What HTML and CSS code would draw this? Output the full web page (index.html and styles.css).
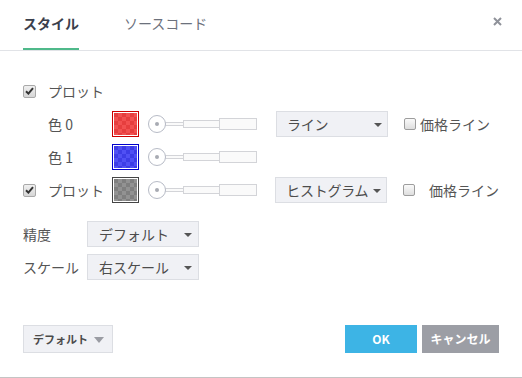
FILE: index.html
```html
<!DOCTYPE html>
<html lang="ja">
<head>
    <meta charset="UTF-8">
    <title>スタイル</title>
    <link rel="stylesheet" href="styles.css">
</head>
<body>
    <div class="dialog">
        <div class="header">
            <div class="tab active">スタイル</div>
            <div class="tab">ソースコード</div>
            <div class="close">
                <svg width="9" height="9" viewBox="0 0 9 9"><path d="M1 1L8 8M8 1L1 8" stroke="#8f929a" stroke-width="2"/></svg>
            </div>
        </div>

        <div class="content">
            <div class="row">
                <span class="check on"><svg width="9" height="8" viewBox="0 0 9 8"><path d="M1 4.2L3.4 6.6L8 1.2" fill="none" stroke="#333" stroke-width="2"/></svg></span>
                <span class="label">プロット</span>
            </div>

            <div class="row">
                <span class="check-space"></span>
                <span class="label">色 0</span>
                <span class="swatch red"><span class="fill"></span></span>
                <div class="slider">
                    <span class="knob"></span><span class="seg seg1"></span><span class="seg seg2"></span><span class="seg seg3"></span>
                </div>
                <div class="select plot-type">ライン<span class="caret"></span></div>
                <span class="check off"></span>
                <span class="opt-label">価格ライン</span>
            </div>

            <div class="row">
                <span class="check-space"></span>
                <span class="label">色 1</span>
                <span class="swatch blue"><span class="fill"></span></span>
                <div class="slider">
                    <span class="knob"></span><span class="seg seg1"></span><span class="seg seg2"></span><span class="seg seg3"></span>
                </div>
            </div>

            <div class="row">
                <span class="check on"><svg width="9" height="8" viewBox="0 0 9 8"><path d="M1 4.2L3.4 6.6L8 1.2" fill="none" stroke="#333" stroke-width="2"/></svg></span>
                <span class="label">プロット</span>
                <span class="swatch gray"><span class="fill"></span></span>
                <div class="slider">
                    <span class="knob"></span><span class="seg seg1"></span><span class="seg seg2"></span><span class="seg seg3"></span>
                </div>
                <div class="select plot-type">ヒストグラム<span class="caret"></span></div>
                <span class="check off"></span>
                <span class="opt-label wide">価格ライン</span>
            </div>

            <div class="field first">
                <span class="field-label">精度</span>
                <div class="select field-select">デフォルト<span class="caret"></span></div>
            </div>
            <div class="field">
                <span class="field-label">スケール</span>
                <div class="select field-select">右スケール<span class="caret"></span></div>
            </div>
        </div>

        <div class="footer">
            <div class="btn-default">デフォルト<span class="caret light"></span></div>
            <div class="actions">
                <div class="btn ok">OK</div>
                <div class="btn cancel">キャンセル</div>
            </div>
        </div>
    </div>
</body>
</html>
```

FILE: styles.css
```css
* {
    margin: 0;
    padding: 0;
    box-sizing: border-box;
}

body {
    font-family: "Noto Sans CJK JP", "Noto Sans", sans-serif;
    background: #fff;
    color: #555;
    font-size: 14px;
}

.dialog {
    width: 522px;
    height: 378px;
    border-bottom: 1px solid #c4c4c4;
    position: relative;
}

.header {
    height: 51px;
    display: flex;
    padding-left: 23px;
    border-bottom: 1px solid #e1e3e7;
}

.tab {
    height: 50px;
    padding-top: 13px;
    line-height: 20px;
    font-size: 14px;
    color: #6c717c;
    margin-right: 45px;
    border-bottom: 2px solid transparent;
}

.tab.active {
    color: #3b404c;
    font-weight: bold;
    border-bottom-color: #4fb98a;
}

.close {
    margin-left: auto;
    margin-right: 20px;
    padding-top: 17px;
}

.close svg {
    display: block;
}

.content {
    padding: 27px 23px 0;
}

.row {
    display: flex;
    align-items: center;
    height: 26px;
    margin-bottom: 7px;
}

.check,
.check-space {
    width: 13px;
    height: 13px;
    margin-right: 12px;
    flex-shrink: 0;
}

.check.on {
    border: 1px solid #a9a9a9;
    border-radius: 2px;
    background: linear-gradient(#f0f0f0, #d6d6d6);
    display: flex;
    align-items: center;
    justify-content: center;
}

.check.off {
    width: 12px;
    height: 12px;
    margin-right: 0;
    border: 1px solid #9d9d9d;
    border-radius: 2px;
    background: linear-gradient(#fafafa, #dedede);
}

.label {
    width: 64px;
    line-height: 20px;
    white-space: nowrap;
}

.swatch {
    width: 27px;
    height: 26px;
    border: 1px solid;
    padding: 1px;
    background: #fff;
}

.swatch .fill {
    display: block;
    width: 100%;
    height: 100%;
    background-size: 8px 8px;
}

.swatch.red { border-color: #cc0000; }
.swatch.red .fill {
    background-color: #ee4646;
    background-image: repeating-conic-gradient(#f25050 0 25%, #e63e3e 0 50%);
}

.swatch.blue { border-color: #0000cc; }
.swatch.blue .fill {
    background-color: #4545ee;
    background-image: repeating-conic-gradient(#5050f4 0 25%, #3d3de6 0 50%);
}

.swatch.gray { border-color: #454545; }
.swatch.gray .fill {
    background-color: #888;
    background-image: repeating-conic-gradient(#929292 0 25%, #7f7f7f 0 50%);
}

.slider {
    display: flex;
    align-items: center;
    margin-left: 9px;
    width: 110px;
}

.knob {
    width: 18px;
    height: 18px;
    border: 1px solid #b7bbc6;
    border-radius: 50%;
    background: #fff;
    position: relative;
    flex-shrink: 0;
}

.knob::after {
    content: "";
    position: absolute;
    left: 6px;
    top: 6px;
    width: 4px;
    height: 4px;
    border-radius: 50%;
    background: #a8abb3;
}

.seg {
    display: block;
    border: 1px solid #d3d4d8;
    background: #fafafa;
}

.seg1 {
    width: 19px;
    height: 4px;
    margin-left: -1px;
}

.seg2 {
    width: 37px;
    height: 8px;
    margin-left: -1px;
}

.seg3 {
    width: 38px;
    height: 12px;
    margin-left: -1px;
}

.select {
    position: relative;
    height: 26px;
    line-height: 24px;
    background: #f0f1f5;
    border: 1px solid #dcdee3;
    color: #4c4c4c;
    white-space: nowrap;
}

.plot-type {
    width: 112px;
    margin-left: 18px;
    margin-right: 16px;
    padding-left: 10px;
    letter-spacing: -0.3px;
}

.caret {
    position: absolute;
    right: 5px;
    top: 11px;
    width: 0;
    height: 0;
    border-left: 4px solid transparent;
    border-right: 4px solid transparent;
    border-top: 4px solid #555;
}

.caret.light {
    right: 8px;
    top: 11px;
    border-left-width: 5px;
    border-right-width: 5px;
    border-top: 6px solid #9a9ca3;
}

.opt-label {
    margin-left: 4px;
    line-height: 20px;
    white-space: nowrap;
}

.opt-label.wide {
    margin-left: 14px;
}

.field {
    display: flex;
    align-items: center;
    margin-bottom: 7px;
}

.field.first {
    margin-top: 18px;
}

.field-label {
    width: 64px;
    line-height: 20px;
    white-space: nowrap;
}

.field-select {
    width: 112px;
    padding-left: 11px;
}

.field-select .caret {
    right: 6px;
}

.footer {
    display: flex;
    justify-content: space-between;
    padding: 0 23px;
    margin-top: 45px;
}

.btn-default {
    position: relative;
    width: 90px;
    height: 28px;
    line-height: 26px;
    padding-left: 9px;
    background: #f0f1f5;
    border: 1px solid #dcdee3;
    font-size: 11px;
    font-weight: bold;
    color: #4a4a4a;
}

.actions {
    display: flex;
    gap: 5px;
}

.btn {
    height: 28px;
    line-height: 27px;
    text-align: center;
    font-size: 12px;
    font-weight: bold;
    color: #fff;
}

.btn.ok {
    width: 72px;
    background: #3db4e5;
}

.btn.cancel {
    width: 77px;
    background: #9c9ea5;
}
```
